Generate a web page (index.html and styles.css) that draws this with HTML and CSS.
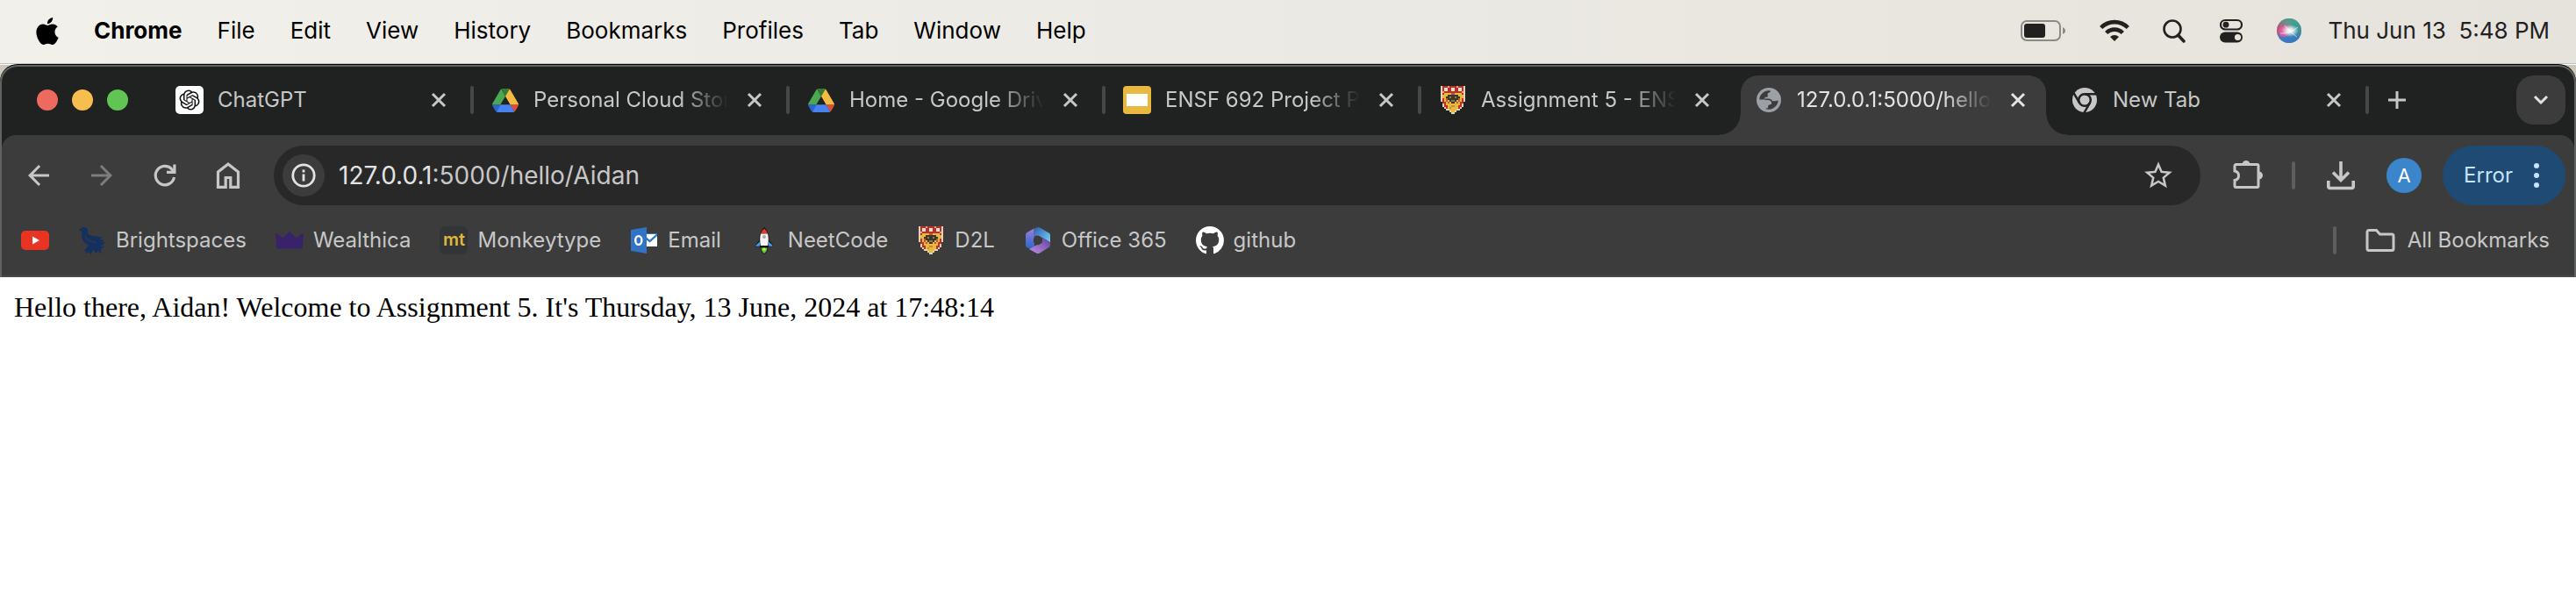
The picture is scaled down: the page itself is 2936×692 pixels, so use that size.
FILE: index.html
```html
<!DOCTYPE html>
<html lang="en">
<head>
<meta charset="utf-8">
<title>127.0.0.1:5000/hello/Aidan</title>
<link rel="stylesheet" href="styles.css">
</head>
<body>
<svg class="defs" aria-hidden="true">
  <symbol id="close" viewBox="0 0 20 20"><path d="M3 3l14 14M17 3L3 17" stroke="currentColor" stroke-width="3" fill="none"/></symbol>
  <symbol id="drive" viewBox="0 0 87.3 78">
    <path d="m6.6 66.85 3.85 6.65c.8 1.4 1.95 2.5 3.3 3.3l13.75-23.8h-27.5c0 1.55.4 3.1 1.2 4.5z" fill="#2d65d0"/>
    <path d="m43.65 25-13.75-23.8c-1.35.8-2.5 1.9-3.3 3.3l-25.4 44a9.06 9.06 0 0 0 -1.2 4.5h27.5z" fill="#4ba751"/>
    <path d="m73.55 76.8c1.35-.8 2.5-1.9 3.3-3.3l1.6-2.75 7.65-13.25c.8-1.4 1.2-2.95 1.2-4.5h-27.5l5.85 11.5z" fill="#dc4c39"/>
    <path d="m43.65 25 13.75-23.8c-1.35-.8-2.9-1.2-4.5-1.2h-18.5c-1.6 0-3.15.45-4.5 1.2z" fill="#337c36"/>
    <path d="m59.8 53h-32.3l-13.75 23.8c1.35.8 2.9 1.2 4.5 1.2h50.8c1.6 0 3.15-.45 4.5-1.2z" fill="#4683ee"/>
    <path d="m73.4 26.5-12.7-22c-.8-1.4-1.95-2.5-3.3-3.3l-13.75 23.8 16.15 28h27.45c0-1.55-.4-3.1-1.2-4.5z" fill="#f3bb41"/>
  </symbol>
  <symbol id="shield" viewBox="0 0 14 16" shape-rendering="crispEdges">
    <path d="M0 0h14v9h-1v3h-1v1h-1v1h-2v1h-1v1h-2v-1h-1v-1h-2v-1h-1v-1h-1v-3h-1z" fill="#e3d2b4"/>
    <path d="M1 0h12v10h-1v2h-1v1h-2v1h-1v1h-2v-1h-1v-1h-2v-1h-1v-2h-1z" fill="#b9312d"/>
    <path d="M2 1h2v2h-2zM6 1h2v2h-2zM10 1h2v2h-2z" fill="#ecdfc9"/>
    <path d="M4 0h1v1h-1zM9 0h1v1h-1zM1 3h1v1h-1zM12 3h1v1h-1z" fill="#d9a38a"/>
    <path d="M2 4h10v1h1v2h-1v2h-1v2h-1v2h-1v1h-1v1h-2v-1h-1v-1h-1v-2h-1v-2h-1v-2h-1v-2h1z" fill="#e9b93e"/>
    <path d="M3 6h1v3h1v1h-1v-1h-1zM10 6h1v3h-1v1h-1v-1h1zM6 4h2v1h-2z" fill="#b9583a"/>
    <path d="M4 5h6v1h1v1h-1v1h-1v1h-1v1h-2v-1h-1v-1h-1v-1h-1v-1h1z" fill="#3d3528"/>
    <path d="M5 6h1v1h-1zM8 6h1v1h-1zM6 8h2v1h-2z" fill="#8a7a55"/>
    <path d="M6 11h2v1h-2zM5 12h1v1h-1z" fill="#c98a35"/>
  </symbol>
</svg>

<header class="menubar">
  <nav class="menus">
    <svg class="apple" viewBox="2 0 20 24"><path d="M12.152 6.896c-.948 0-2.415-1.078-3.96-1.04-2.04.027-3.91 1.183-4.961 3.014-2.117 3.675-.546 9.103 1.519 12.09 1.013 1.454 2.208 3.09 3.792 3.039 1.52-.065 2.09-.987 3.935-.987 1.831 0 2.35.987 3.96.948 1.637-.026 2.676-1.48 3.676-2.948 1.156-1.688 1.636-3.325 1.662-3.415-.039-.013-3.182-1.221-3.22-4.857-.026-3.04 2.48-4.494 2.597-4.559-1.429-2.09-3.623-2.324-4.39-2.376-2-.156-3.675 1.09-4.61 1.09zM15.53 3.83c.843-1.012 1.4-2.427 1.245-3.83-1.207.052-2.662.805-3.532 1.818-.78.896-1.454 2.338-1.273 3.714 1.338.104 2.715-.688 3.559-1.701"/></svg>
    <button class="app">Chrome</button>
    <button>File</button>
    <button>Edit</button>
    <button>View</button>
    <button>History</button>
    <button>Bookmarks</button>
    <button>Profiles</button>
    <button>Tab</button>
    <button>Window</button>
    <button>Help</button>
  </nav>
  <div class="status">
    <div class="tray">
    <svg width="52" height="24" viewBox="0 0 52 24"><rect x="1" y="1" width="44" height="22" rx="6" fill="none" stroke="#8b8a85" stroke-width="2"/><rect x="4" y="4" width="24" height="16" rx="3" fill="#22211f"/><path d="M48 8c4 1.500 4 6.500 0 8z" fill="#8b8a85"/></svg>
    <svg width="34" height="26" viewBox="0 0 34 26" fill="none" stroke="#22211f" stroke-width="4.600"><path d="M1.700 9.500a21.500 21.500 0 0 1 30.600 0"/><path d="M7.700 15.500a13 13 0 0 1 18.600 0"/><path d="M12 20a7.200 7.200 0 0 1 10 0l-5 5z" fill="#22211f" stroke="none"/></svg>
    <svg width="26" height="28" viewBox="0 0 26 28" fill="none" stroke="#22211f"><circle cx="11" cy="12" r="9.500" stroke-width="2.600"/><path d="M17.500 19l6.500 7" stroke-width="3.400" stroke-linecap="round"/></svg>
    <svg width="28" height="28" viewBox="0 0 28 28"><rect x="2" y="2" width="24" height="10.500" rx="5.200" fill="none" stroke="#22211f" stroke-width="2.200"/><circle cx="8" cy="7.200" r="3.400" fill="#22211f"/><rect x="1" y="15.500" width="26" height="12" rx="6" fill="#22211f"/><circle cx="21.500" cy="21.500" r="3.600" fill="#e6e3dd"/></svg>
    <svg width="28" height="28" viewBox="0 0 28 28">
      <defs>
        <linearGradient id="s1" x1="0" y1=".2" x2="1" y2=".5"><stop offset="0" stop-color="#b8436f"/><stop offset=".35" stop-color="#c66a98"/><stop offset=".6" stop-color="#4a9aa0"/><stop offset="1" stop-color="#3a8f90"/></linearGradient>
        <linearGradient id="s2" x1="0" y1="0" x2="0" y2="1"><stop offset=".5" stop-color="#3978c4" stop-opacity="0"/><stop offset=".85" stop-color="#3978c4"/></linearGradient>
        <linearGradient id="s3" x1=".4" y1="0" x2=".4" y2="1"><stop offset="0" stop-color="#3fa383"/><stop offset=".4" stop-color="#3fa383" stop-opacity="0"/></linearGradient>
        <radialGradient id="s4"><stop offset="0" stop-color="#fff"/><stop offset=".35" stop-color="#fff" stop-opacity=".8"/><stop offset="1" stop-color="#fff" stop-opacity="0"/></radialGradient>
      </defs>
      <circle cx="14" cy="14" r="14" fill="url(#s1)"/><circle cx="14" cy="14" r="14" fill="url(#s2)"/><circle cx="14" cy="14" r="14" fill="url(#s3)"/>
      <circle cx="8" cy="15" r="6" fill="#ef5d9c" opacity=".6"/>
      <ellipse cx="15" cy="14" rx="10" ry="7" fill="url(#s4)"/><path d="M4 17q10 1 20 -7M9 8q6 8 14 13" stroke="#fff" stroke-opacity=".6" fill="none"/>
    </svg>
    </div>
    <time class="clock">Thu Jun 13&nbsp; 5:48 PM</time>
  </div>
</header>

<div class="desktop">
<div class="window">
  <div class="strip">
    <div class="lights"><i class="red"></i><i class="yellow"></i><i class="green"></i></div>
    <div class="tab">
      <span class="fav"><svg width="32" height="32" viewBox="0 0 32 32"><rect width="32" height="32" rx="5" fill="#fff"/><g transform="translate(4.500 4.500) scale(.96)"><path d="M22.2819 9.8211a5.9847 5.9847 0 0 0-.5157-4.9108 6.0462 6.0462 0 0 0-6.5098-2.9A6.0651 6.0651 0 0 0 4.9807 4.1818a5.9847 5.9847 0 0 0-3.9977 2.9 6.0462 6.0462 0 0 0 .7427 7.0966 5.98 5.98 0 0 0 .511 4.9107 6.051 6.051 0 0 0 6.5146 2.9001A5.9847 5.9847 0 0 0 13.2599 24a6.0557 6.0557 0 0 0 5.7718-4.2058 5.9894 5.9894 0 0 0 3.9977-2.9001 6.0557 6.0557 0 0 0-.7475-7.0729zm-9.022 12.6081a4.4755 4.4755 0 0 1-2.8764-1.0408l.1419-.0804 4.7783-2.7582a.7948.7948 0 0 0 .3927-.6813v-6.7369l2.02 1.1686a.071.071 0 0 1 .038.052v5.5826a4.504 4.504 0 0 1-4.4945 4.4944zm-9.6607-4.1254a4.4708 4.4708 0 0 1-.5346-3.0137l.142.0852 4.783 2.7582a.7712.7712 0 0 0 .7806 0l5.8428-3.3685v2.3324a.0804.0804 0 0 1-.0332.0615L9.74 19.9502a4.4992 4.4992 0 0 1-6.1408-1.6464zM2.3408 7.8956a4.485 4.485 0 0 1 2.3655-1.9728V11.6a.7664.7664 0 0 0 .3879.6765l5.8144 3.3543-2.0201 1.1685a.0757.0757 0 0 1-.071 0l-4.8303-2.7865A4.504 4.504 0 0 1 2.3408 7.872zm16.5963 3.8558L13.1038 8.364 15.1192 7.2a.0757.0757 0 0 1 .071 0l4.8303 2.7913a4.4944 4.4944 0 0 1-.6765 8.1042v-5.6772a.79.79 0 0 0-.407-.667zm2.0107-3.0231l-.142-.0852-4.7735-2.7818a.7759.7759 0 0 0-.7854 0L9.409 9.2297V6.8974a.0662.0662 0 0 1 .0284-.0615l4.8303-2.7866a4.4992 4.4992 0 0 1 6.6802 4.66zM8.3065 12.863l-2.02-1.1638a.0804.0804 0 0 1-.038-.0567V6.0742a4.4992 4.4992 0 0 1 7.3757-3.4537l-.142.0805L8.704 5.459a.7948.7948 0 0 0-.3927.6813zm1.0976-2.3654l2.602-1.4998 2.6069 1.4998v2.9994l-2.5974 1.4997-2.6067-1.4997Z" fill="#111"/></g></svg></span>
      <span class="title">ChatGPT</span>
      <button class="x" aria-label="Close tab"><svg width="20" height="20"><use href="#close"/></svg></button>
    </div>
    <div class="tab">
      <span class="fav"><svg width="30" height="27"><use href="#drive"/></svg></span>
      <span class="title fade">Personal Cloud Stor</span>
      <button class="x" aria-label="Close tab"><svg width="20" height="20"><use href="#close"/></svg></button>
    </div>
    <div class="tab">
      <span class="fav"><svg width="30" height="27"><use href="#drive"/></svg></span>
      <span class="title fade">Home - Google Driv</span>
      <button class="x" aria-label="Close tab"><svg width="20" height="20"><use href="#close"/></svg></button>
    </div>
    <div class="tab">
      <span class="fav"><svg width="32" height="32" viewBox="0 0 32 32"><rect width="32" height="32" rx="4" fill="#e8b840"/><rect x="4" y="9" width="24" height="14" fill="#fff"/></svg></span>
      <span class="title fade">ENSF 692 Project P</span>
      <button class="x" aria-label="Close tab"><svg width="20" height="20"><use href="#close"/></svg></button>
    </div>
    <div class="tab nosep">
      <span class="fav"><svg width="28" height="32"><use href="#shield"/></svg></span>
      <span class="title fade">Assignment 5 - ENS</span>
      <button class="x" aria-label="Close tab"><svg width="20" height="20"><use href="#close"/></svg></button>
    </div>
    <div class="tab active">
      <span class="fav"><svg width="28" height="28" viewBox="0 0 28 28"><circle cx="14" cy="14" r="14" fill="#9aa0a6"/><path d="M3.300 13.500C3.500 8 8 3.600 13.500 3.300l2.500.3c0 2.400-2.800 1.900-3.400 3.400-.4 1.200.7 1.700.2 2.900-.5 1-2.200.4-3.200 1.300-.8.7-.4 1.900-1.300 2.300z" fill="#3c3c3c"/><path d="M24.700 14.500c-.2 5.500-4.700 10-10.700 10.200-1.500 0-2.900-.3-4.200-.9l3-.6c1-.8-.2-2.100.8-3.200 1-1 3-.2 3.500-1.800.3-1.200-.3-3.200-1.800-3.800-1.300-.5-3-.4-6-.5v-1.500h4.700c1.800 0 2.600.9 3.400 1.800.9 1 1.900 1.300 3.200 1.100 1.500-.2 2.600-.3 4.100-.8z" fill="#3c3c3c"/></svg></span>
      <span class="title fade">127.0.0.1:5000/hello</span>
      <button class="x" aria-label="Close tab"><svg width="20" height="20"><use href="#close"/></svg></button>
    </div>
    <div class="tab">
      <span class="fav"><svg width="28" height="28" viewBox="0 0 28 28"><circle cx="14" cy="14" r="14" fill="#c7c7c7"/><g fill="none" stroke="#202221" stroke-width="2.500"><circle cx="14" cy="14" r="6.800"/><path d="M14 7.200h13"/><path d="M14 7.200h13" transform="rotate(120 14 14)"/><path d="M14 7.200h13" transform="rotate(240 14 14)"/></g></svg></span>
      <span class="title">New Tab</span>
      <button class="x" aria-label="Close tab"><svg width="20" height="20"><use href="#close"/></svg></button>
    </div>
    <button class="newtab" aria-label="New tab"><svg width="20" height="20" viewBox="0 0 20 20"><path d="M10 0v20M0 10h20" stroke="#c7c7c7" stroke-width="3"/></svg></button>
    <button class="search" aria-label="Search tabs"><svg width="18" height="12" viewBox="0 0 18 12"><path d="M2 2l7 7 7-7" fill="none" stroke="#e3e3e3" stroke-width="3"/></svg></button>
  </div>

  <div class="chrome">
    <div class="toolbar">
      <div class="nav">
        <button aria-label="Back"><svg viewBox="0 0 24 24"><path d="M20 11H7.830l5.590-5.590L12 4l-8 8 8 8 1.410-1.410L7.830 13H20v-2z"/></svg></button>
        <button class="off" aria-label="Forward"><svg viewBox="0 0 24 24"><path d="M12 4l-1.410 1.410L16.170 11H4v2h12.170l-5.580 5.590L12 20l8-8z"/></svg></button>
        <button aria-label="Reload"><svg viewBox="0 0 36 36"><path d="M28.500 20A10.700 10.700 0 1 1 26 11l2 3" fill="none" stroke="currentColor" stroke-width="3.200"/><path d="M27.300 5.500h3.200V16H20v-3.200h7.300z"/></svg></button>
        <button aria-label="Home"><svg viewBox="0 0 36 36"><path d="M6.500 14L18 5l11.500 9v17.300h-8.700V20.500h-5.600v10.800H6.500z" fill="none" stroke="currentColor" stroke-width="3.200"/></svg></button>
      </div>
      <div class="omnibox">
        <button class="info" aria-label="Site information"><svg width="28" height="28" viewBox="0 0 28 28"><circle cx="14" cy="14" r="12.200" fill="none" stroke="#e3e3e3" stroke-width="2.800"/><path d="M14 12.500v8M14 7.500v3" stroke="#e3e3e3" stroke-width="2.800"/></svg></button>
        <div class="url" role="textbox" aria-label="Address"><b>127.0.0.1</b>:5000/hello/Aidan</div>
        <button class="star" aria-label="Bookmark this tab"><svg width="38" height="38" viewBox="0 0 24 24"><path fill="currentColor" d="M22 9.240l-7.190-.62L12 2 9.190 8.630 2 9.240l5.460 4.730L5.820 21 12 17.270 18.180 21l-1.630-7.030L22 9.240zM12 15.400l-3.760 2.270 1-4.280-3.320-2.880 4.380-.38L12 6.100l1.710 4.040 4.380.38-3.320 2.880 1 4.280L12 15.400z"/></svg></button>
      </div>
      <button class="ext" aria-label="Extensions"><svg viewBox="0 0 36 36"><path d="M4.500 6.500h24a1.500 1.500 0 0 1 1.500 1.500v23a1.500 1.500 0 0 1-1.500 1.500h-24a1.500 1.500 0 0 1-1.500-1.500v-6.500c6-1 6-9.500 0-10.500V8a1.500 1.500 0 0 1 1.500-1.500z" transform="translate(0 -1)" fill="none" stroke="currentColor" stroke-width="3"/><path d="M11.500 5.500a4.500 4.500 0 0 1 9 0zM30.500 13.500a4.500 4.500 0 0 1 0 9z"/></svg></button>
      <i class="sep"></i>
      <button class="dl" aria-label="Downloads"><svg viewBox="0 0 36 36"><path d="M18 2v21M9 14.500l9 9 9-9M3.800 24v6.500a2 2 0 0 0 2 2h24.400a2 2 0 0 0 2-2V24" fill="none" stroke="currentColor" stroke-width="3.600"/></svg></button>
      <button class="avatar">A</button>
      <button class="error">Error<svg width="6" height="28" viewBox="0 0 6 28" fill="#c5e4fd"><circle cx="3" cy="3" r="3"/><circle cx="3" cy="14" r="3"/><circle cx="3" cy="25" r="3"/></svg></button>
    </div>

    <nav class="bookmarks">
      <a href="#" aria-label="YouTube"><svg width="32" height="32" viewBox="0 0 32 32"><rect y="5" width="32" height="22" rx="5" fill="#e93323"/><path d="M13 11.500l8 4.500-8 4.500z" fill="#fff"/></svg></a>
      <a href="#"><svg width="32" height="32" viewBox="0 0 32 32"><path d="M1 4.500C2.500 4 3 1 6.500 1c3.500 0 5 3 4.500 6 .5 3 3 4 7 4l10 1.500-4 2.500 6 .5-3.500 2.500 4.500 0c-1.500 3-4 4.500-8 5l7.500 0-4.500 3 .5 5.500-4-3.500-3 3-2-4.500-3 5-3-2-3 2 1-3-2.500-.5 5-6.500C8 20 5 17 4.500 12.500 4 9 5 7 3.500 5.500z" fill="#14305f"/><path d="M8 11c2 5 6 6.500 13 7.500" fill="none" stroke="#3c3c3c" stroke-width="1.200"/><circle cx="5.500" cy="3.500" r=".6" fill="#3c3c3c"/></svg>Brightspaces</a>
      <a href="#"><svg width="32" height="32" viewBox="0 0 32 32"><path d="M2 25L.5 8.500l7.800 5.200L16 6l7.700 7.700 7.800-5.200L30 25z" fill="#38226a" stroke="#38226a" stroke-linejoin="round"/></svg>Wealthica</a>
      <a href="#"><span class="mt" aria-hidden="true">mt</span>Monkeytype</a>
      <a href="#"><svg width="32" height="32" viewBox="0 0 32 32"><path d="M1 4l18-3v30L1 28z" fill="#3173c4"/><path d="M19 9h12v14H19z" fill="#fff"/><path d="M19 8h12v3l-8.500 7.500L19 15.500v-3l3.500 3L30 9H19z" fill="#3173c4"/><ellipse cx="9.800" cy="16" rx="3.600" ry="4.900" fill="none" stroke="#fff" stroke-width="2.400"/></svg>Email</a>
      <a href="#"><svg width="32" height="32" viewBox="0 0 32 32"><path d="M16 1c-4 4-6 9-5.500 15L6 21v2.500l5-.5.500 1c.5 4 2 6 4.500 8 2.500-2 4-4 4.500-8l.5-1 5 .5V21l-4.500-5C22 10 20 5 16 1z" fill="#111"/><path d="M16 2.500c-2 2-3.500 4-4 6h8c-.5-2-2-4-4-6z" fill="#e23b2e"/><path d="M12 8.500h8c1 4 1 8 .2 13.500h-8.400C11 16.500 11 12.500 12 8.500z" fill="#f4f4f4"/><circle cx="16" cy="12" r="2" fill="#aaa"/><path d="M11 17.500l-4.500 4v1.500l4.500-.5zM21 17.500l4.500 4v1.500l-4.500-.5z" fill="#3e9af0"/><path d="M12.500 24.500h7c0 3-1.500 5-3.500 6.500-2-1.500-3.500-3.500-3.500-6.500z" fill="#62c93f"/><circle cx="16" cy="26" r="1.600" fill="#c9ef4b"/></svg>NeetCode</a>
      <a href="#"><svg width="32" height="32"><use href="#shield"/></svg>D2L</a>
      <a href="#"><svg width="32" height="32" viewBox="0 0 32 32">
        <defs>
          <linearGradient id="o1" x1="0" y1="0" x2="0" y2="1"><stop offset="0" stop-color="#a77bd8"/><stop offset=".5" stop-color="#5a74d6"/><stop offset="1" stop-color="#2f66c4"/></linearGradient>
          <linearGradient id="o2" x1="0" y1="0" x2="1" y2="1"><stop offset="0" stop-color="#2f5fb5"/><stop offset="1" stop-color="#74d6f5"/></linearGradient>
          <linearGradient id="o3" x1="0" y1="1" x2="1" y2="0"><stop offset="0" stop-color="#c090ea"/><stop offset="1" stop-color="#5f3f96"/></linearGradient>
        </defs>
        <path d="M11.500 2.500L3.500 7A3 3 0 0 0 2 9.500v12A3 3 0 0 0 3.500 24l4 2 4.500-3z" fill="url(#o1)"/><path d="M12 11V2.500L15 1.200q1.500-.5 3 .3L28 7.300a3 3 0 0 1 2 2.700v9L20 12.500l-4-2z" fill="url(#o2)"/><path d="M30 18v3.500a3 3 0 0 1-1.500 2.500l-10.500 6.500q-2 1-4 0L6 26l9-5 6-8.500z" fill="url(#o3)"/><path d="M16 11l4.500 2.500v5L16 21l-4.500-2.500v-5z" fill="#3c3c3c" stroke="#3c3c3c" stroke-linejoin="round"/></svg>Office 365</a>
      <a href="#"><svg width="32" height="32" viewBox="0 0 16 16"><path fill="#fff" d="M8 0C3.580 0 0 3.580 0 8c0 3.540 2.290 6.530 5.470 7.590.4.070.55-.17.55-.38 0-.19-.01-.82-.01-1.490-2.010.37-2.530-.49-2.690-.94-.09-.23-.48-.94-.82-1.130-.28-.15-.68-.52-.01-.53.630-.01 1.080.58 1.230.82.720 1.210 1.870.87 2.330.66.070-.52.280-.87.510-1.070-1.780-.2-3.640-.89-3.640-3.950 0-.87.310-1.590.82-2.150-.08-.2-.36-1.020.08-2.120 0 0 .67-.21 2.200.82.640-.18 1.320-.27 2-.27s1.360.09 2 .27c1.530-1.040 2.200-.82 2.200-.82.440 1.100.16 1.920.08 2.120.510.56.82 1.270.82 2.150 0 3.070-1.870 3.750-3.650 3.950.29.25.54.73.54 1.480 0 1.070-.01 1.930-.01 2.200 0 .21.15.46.55.38A8.010 8.010 0 0 0 16 8c0-4.420-3.580-8-8-8z"/></svg>github</a>
      <i class="sep push"></i>
      <a href="#" class="all"><svg width="34" height="28" viewBox="0 0 34 28"><path d="M4 2.500h8.500l4 4.500H30a2 2 0 0 1 2 2v14.500a2 2 0 0 1-2 2H4a2 2 0 0 1-2-2v-19a2 2 0 0 1 2-2z" fill="none" stroke="#c7c7c7" stroke-width="3"/></svg>All Bookmarks</a>
    </nav>
  </div>
</div>
</div>

<main class="page">Hello there, Aidan! Welcome to Assignment 5. It's Thursday, 13 June, 2024 at 17:48:14</main>
</body>
</html>
```
FILE: styles.css
```css
* { box-sizing: border-box; }

body {
  margin: 0;
  background: #fff;
  font-family: Inter, "Liberation Sans", sans-serif;
  font-size: 24px;
  line-height: 32px;
  font-optical-sizing: none;
}

svg { display: block; flex: none; }
.defs { position: absolute; width: 0; height: 0; }

button {
  border: 0;
  padding: 0;
  margin: 0;
  background: none;
  color: inherit;
  font: inherit;
  font-optical-sizing: inherit;
}

/* System menu bar */
.menubar {
  display: flex;
  justify-content: space-between;
  align-items: center;
  height: 73px;
  padding: 0 30px 2px 41px;
  border-bottom: 1px solid #c4c2bc;
  background: linear-gradient(90deg, #f1f0eb, #e6e3dc);
  font-size: 26px;
  color: #000;
}

.menus { display: flex; align-items: center; gap: 40px; }
.apple { width: 26px; height: 31px; }
.app { font-weight: 700; }
.status { display: flex; align-items: center; gap: 30px; color: #22211f; }
.tray { display: flex; align-items: center; gap: 38px; }
.clock { white-space: nowrap; }

/* Browser window */
.desktop { background: #cdc7bc; }

.window {
  border: 2px solid #606362;
  border-bottom: 0;
  border-radius: 20px 20px 0 0;
  box-shadow: 0 -1px 0 #000;
  background: #202221;
  overflow: hidden;
  margin-top: 1px;
  color: #c7c7c7;
}

.strip {
  display: flex;
  align-items: flex-start;
  padding: 10px 10px 0 40px;
}

.lights { display: flex; align-items: center; gap: 16px; height: 56px; margin-right: 34px; }
.lights i { width: 24px; height: 24px; border-radius: 50%; }
.red { background: #ed6a5f; }
.yellow { background: #f5be4f; }
.green { background: #61c554; }

.tab {
  display: flex;
  align-items: center;
  flex: 0 1 360px;
  min-width: 0;
  height: 56px;
  margin-bottom: 12px;
  padding-left: 20px;
}
.tab::after {
  content: "";
  width: 4px;
  height: 32px;
  margin-left: 26px;
  border-radius: 2px;
  background: #474747;
}
.nosep::after { background: none; }

.fav { display: flex; justify-content: center; align-items: center; width: 32px; flex: none; }
.title { flex: 1; min-width: 0; margin: 0 20px 0 16px; overflow: hidden; white-space: nowrap; }
.fade {
  -webkit-mask-image: linear-gradient(90deg, #000 calc(100% - 56px), transparent);
  mask-image: linear-gradient(90deg, #000 calc(100% - 56px), transparent);
}

.active {
  position: relative;
  flex-basis: 348px;
  height: 68px;
  margin: 0 8px 0 4px;
  padding: 0 22px 12px 16px;
  border-radius: 20px 20px 0 0;
  background: #3c3c3c;
  color: #e3e3e3;
}
.active::before, .active::after {
  content: "";
  position: absolute;
  bottom: 0;
  width: 24px;
  height: 24px;
  margin: 0;
  border-radius: 0;
}
.active::before { right: 100%; background: radial-gradient(circle at 0 0, transparent 23px, #3c3c3c 24px); }
.active::after { left: 100%; background: radial-gradient(circle at 100% 0, transparent 23px, #3c3c3c 24px); }

.newtab { display: flex; align-items: center; height: 56px; margin-left: 22px; }
.search {
  display: flex;
  align-items: center;
  justify-content: center;
  width: 56px;
  height: 56px;
  margin-left: auto;
  border-radius: 20px;
  background: #3c3c3c;
}

.chrome {
  border-radius: 16px 16px 0 0;
  border-bottom: 2px solid #484848;
  background: #3c3c3c;
}

.toolbar { display: flex; align-items: center; padding: 12px 10px 0 24px; }
.toolbar svg[viewBox="0 0 36 36"], .nav svg { width: 36px; height: 36px; fill: currentColor; }
.nav { display: flex; gap: 36px; margin-right: 34px; }
.off { color: #7d7d7d; }

.omnibox {
  display: flex;
  align-items: center;
  flex: 1;
  height: 68px;
  padding: 0 29px 0 10px;
  border-radius: 34px;
  background: #282828;
  font-size: 28px;
}
.info {
  display: flex;
  align-items: center;
  justify-content: center;
  width: 48px;
  height: 48px;
  border-radius: 50%;
  background: #3c3c3c;
}
.url { flex: 1; margin-left: 16px; }
.url b { font-weight: 400; color: #e3e3e3; }

.ext { margin: 0 32px 0 36px; }
.sep { flex: none; width: 4px; height: 32px; border-radius: 2px; background: #5e5e5e; }
.dl { margin: 0 34px; }

.avatar {
  width: 40px;
  height: 40px;
  border-radius: 50%;
  background: #3b86cb;
  color: #fff;
  font-size: 22px;
}

.error {
  display: flex;
  align-items: center;
  gap: 24px;
  height: 68px;
  margin-left: 24px;
  padding: 0 30px 0 24px;
  border-radius: 34px;
  background: #1f4a74;
  color: #c5e4fd;
}

.bookmarks { display: flex; align-items: center; gap: 33px; padding: 24px 28px 24px 22px; }
.bookmarks a { display: flex; align-items: center; gap: 11px; color: inherit; text-decoration: none; white-space: nowrap; }
.bookmarks .all { gap: 14px; }
.push { margin-left: auto; }

.mt {
  width: 32px;
  height: 32px;
  border-radius: 7px;
  background: #323437;
  color: #dfb83a;
  font-size: 20px;
  font-weight: 600;
  line-height: 30px;
  text-align: center;
}

/* Served page */
.page {
  padding: 16px;
  color: #000;
  font-family: "Liberation Serif", "Times New Roman", serif;
  font-size: 32px;
  line-height: 37px;
}
```
